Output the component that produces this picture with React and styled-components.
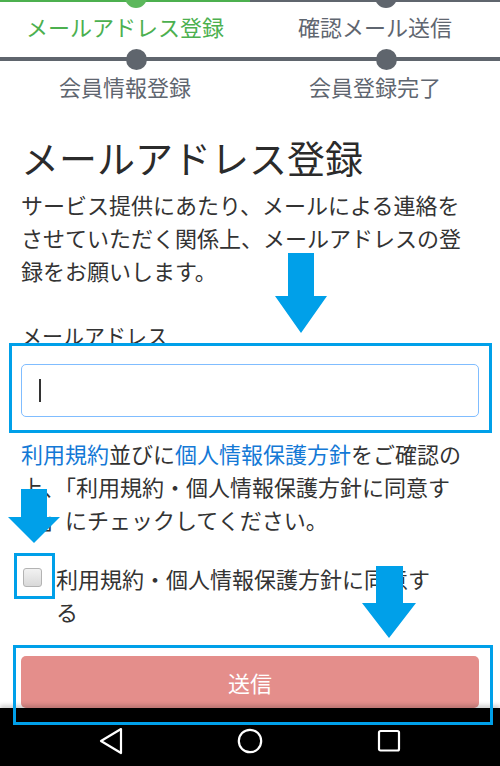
import React from 'react';
import styled, { createGlobalStyle } from 'styled-components';

const GlobalStyle = createGlobalStyle`
  html, body {
    margin: 0;
    padding: 0;
    background: #ffffff;
  }
  body {
    font-family: 'Noto Sans CJK JP', 'Noto Sans', sans-serif;
    color: #333333;
  }
`;

const steps = [
  [
    { label: 'メールアドレス登録', active: true },
    { label: '確認メール送信' },
  ],
  [{ label: '会員情報登録' }, { label: '会員登録完了' }],
];

const App = () => {
  return (
    <>
      <GlobalStyle />
      <Screen>
        <Stepper>
          <Track $thin>
            {steps[0].map((s) => (
              <Segment key={s.label} $active={s.active}>
                <Dot $active={s.active} $top />
              </Segment>
            ))}
          </Track>
          <StepLabels>
            {steps[0].map((s) => (
              <StepLabel key={s.label} $active={s.active}>
                {s.label}
              </StepLabel>
            ))}
          </StepLabels>
          <Track>
            {steps[1].map((s) => (
              <Segment key={s.label}>
                <Dot />
              </Segment>
            ))}
          </Track>
          <StepLabels $second>
            {steps[1].map((s) => (
              <StepLabel key={s.label}>{s.label}</StepLabel>
            ))}
          </StepLabels>
        </Stepper>

        <Content>
          <Title>メールアドレス登録</Title>
          <Lead>
            サービス提供にあたり、メールによる連絡をさせていただく関係上、メールアドレスの登録をお願いします。
          </Lead>

          <FieldLabel>メールアドレス</FieldLabel>
          <Field>
            <Caret />
          </Field>

          <Notice>
            <Link href="#">利用規約</Link>並びに<Link href="#">個人情報保護方針</Link>
            をご確認の上、「利用規約・個人情報保護方針に同意する」にチェックしてください。
          </Notice>

          <CheckRow>
            <CheckBox />
            <CheckText>利用規約・個人情報保護方針に同意する</CheckText>
          </CheckRow>

          <SubmitButton type="button" disabled>
            送信
          </SubmitButton>
        </Content>

        <NavBar>
          <svg width="24" height="28" viewBox="0 0 24 28">
            <polygon
              points="22,2 2,14 22,26"
              fill="none"
              stroke="#fff"
              strokeWidth="2.2"
              strokeLinejoin="round"
            />
          </svg>
          <svg width="26" height="26" viewBox="0 0 26 26">
            <circle cx="13" cy="13" r="11.2" fill="none" stroke="#fff" strokeWidth="2.2" />
          </svg>
          <svg width="24" height="24" viewBox="0 0 24 24">
            <rect x="2" y="2" width="20" height="19.5" rx="1.5" fill="none" stroke="#fff" strokeWidth="2.2" />
          </svg>
        </NavBar>

        {/* annotation overlays */}
        <Highlight style={{ left: 9, top: 343, width: 483, height: 90 }} />
        <Highlight style={{ left: 14, top: 553, width: 41, height: 46 }} />
        <Highlight style={{ left: 13, top: 645, width: 480, height: 80 }} />

        <Arrow style={{ left: 275, top: 253 }} width="52" height="80" viewBox="0 0 52 80">
          <polygon points="13,0 39,0 39,43 52,43 26,80 0,43 13,43" />
        </Arrow>
        <Arrow style={{ left: 8, top: 489 }} width="52" height="54" viewBox="0 0 52 54">
          <polygon points="13,0 39,0 39,28 52,28 26,54 0,28 13,28" />
        </Arrow>
        <Arrow style={{ left: 362, top: 566 }} width="54" height="72" viewBox="0 0 54 72">
          <polygon points="14,0 41,0 41,37 54,37 27,72 0,37 14,37" />
        </Arrow>
      </Screen>
    </>
  );
};

const Screen = styled.div`
  position: relative;
  width: 500px;
  height: 766px;
  overflow: hidden;
  display: flex;
  flex-direction: column;
  background: #ffffff;
`;

const Stepper = styled.div`
  display: flex;
  flex-direction: column;
`;

const Track = styled.div`
  display: grid;
  grid-template-columns: 1fr 1fr;
  height: ${(p) => (p.$thin ? '2px' : '4px')};
  margin-top: ${(p) => (p.$thin ? '0' : '14px')};
`;

const Segment = styled.div`
  position: relative;
  background: ${(p) => (p.$active ? '#4cb04f' : '#5f656d')};
`;

const Dot = styled.span`
  position: absolute;
  left: ${(p) => (p.$top ? '125px' : '126px')};
  top: ${(p) => (p.$top ? '-14px' : '-8px')};
  width: ${(p) => (p.$top ? '22px' : '21px')};
  height: ${(p) => (p.$top ? '22px' : '21px')};
  border-radius: 50%;
  background: ${(p) => (p.$active ? '#5cb85c' : '#5f656d')};
`;

const StepLabels = styled.div`
  display: grid;
  grid-template-columns: 1fr 1fr;
  padding-top: ${(p) => (p.$second ? '9px' : '8px')};
`;

const StepLabel = styled.div`
  text-align: center;
  font-size: 22px;
  line-height: 33px;
  color: ${(p) => (p.$active ? '#4cb04f' : '#5f6670')};
`;

const Content = styled.div`
  flex: 1;
  display: flex;
  flex-direction: column;
  padding: 0 21px;
`;

const Title = styled.h1`
  margin: 31px 0 0;
  font-size: 38px;
  line-height: 46px;
  font-weight: 400;
  color: #2b2b2b;
`;

const Lead = styled.p`
  margin: 8px 0 0;
  font-size: 22px;
  line-height: 33px;
  color: #333333;
`;

const FieldLabel = styled.label`
  display: block;
  margin-top: 32px;
  font-size: 21px;
  line-height: 33px;
  color: #333333;
`;

const Field = styled.div`
  margin-top: 12px;
  height: 53px;
  box-sizing: border-box;
  display: flex;
  align-items: center;
  padding-left: 17px;
  border: 1.5px solid #80bdff;
  border-radius: 5px;
  background: #ffffff;
`;

const Caret = styled.span`
  width: 1.5px;
  height: 23px;
  background: #333333;
`;

const Notice = styled.p`
  margin: 20px 0 0;
  font-size: 22px;
  line-height: 33px;
  color: #333333;
`;

const Link = styled.a`
  color: #1479d6;
  text-decoration: none;
`;

const CheckRow = styled.div`
  margin-top: 26px;
  display: flex;
  align-items: flex-start;
`;

const CheckBox = styled.span`
  flex: none;
  width: 19px;
  height: 19px;
  margin: 6px 0 0 2px;
  box-sizing: border-box;
  border: 1px solid #b3b3b3;
  border-radius: 3px;
  background: linear-gradient(#f2f2f2, #d9d9d9);
`;

const CheckText = styled.span`
  margin-left: 14px;
  max-width: 385px;
  font-size: 22px;
  line-height: 33px;
  color: #333333;
`;

const SubmitButton = styled.button`
  margin-top: auto;
  height: 52px;
  width: 100%;
  border: none;
  border-radius: 5px;
  background: #e48e8b;
  color: #ffffff;
  font-family: 'Noto Sans CJK JP', 'Noto Sans', sans-serif;
  font-size: 22px;
`;

const NavBar = styled.div`
  flex: none;
  height: 58px;
  box-sizing: border-box;
  padding-top: 7px;
  display: flex;
  align-items: center;
  justify-content: center;
  gap: 114px;
  background: #000000;
  box-shadow: 0 -3px 4px rgba(0, 0, 0, 0.18);
`;

const Highlight = styled.div`
  position: absolute;
  box-sizing: border-box;
  border: 3px solid #00a0e9;
  pointer-events: none;
`;

const Arrow = styled.svg`
  position: absolute;
  fill: #00a0e9;
  pointer-events: none;
`;

export default App;
